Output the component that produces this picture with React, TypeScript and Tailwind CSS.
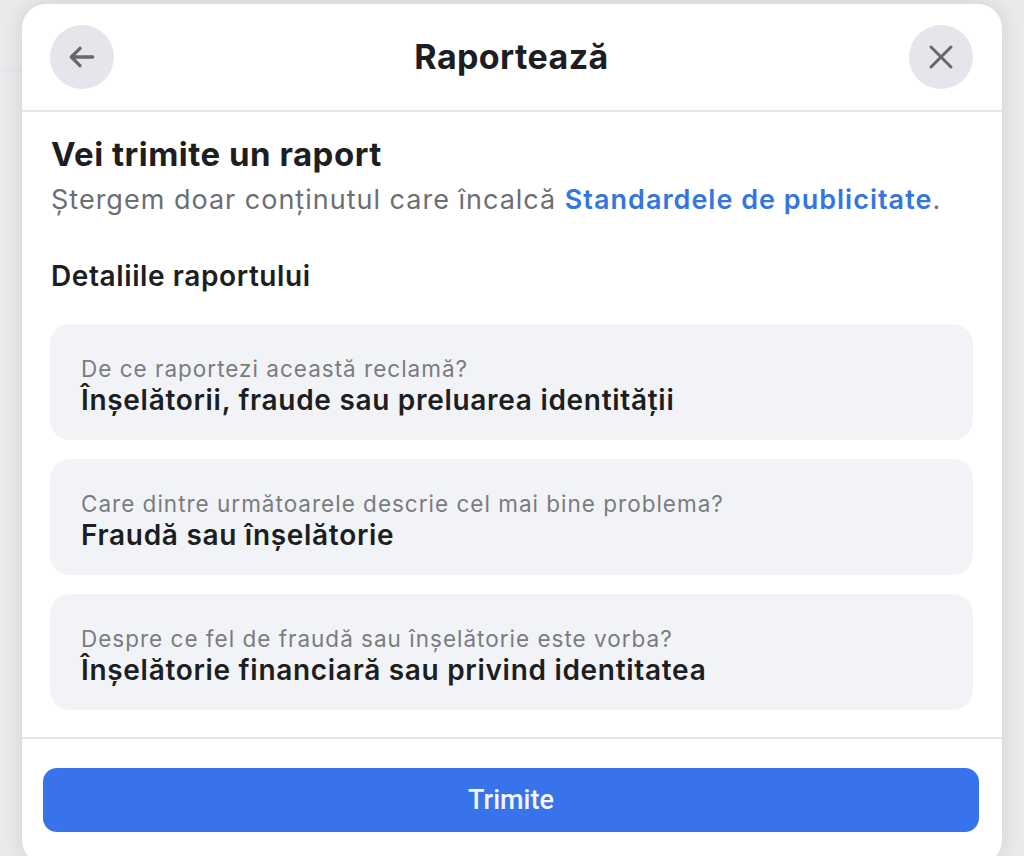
import React from "react";

const cards = [
  { label: "De ce raportezi această reclamă?", value: "Înșelătorii, fraude sau preluarea identității" },
  { label: "Care dintre următoarele descrie cel mai bine problema?", value: "Fraudă sau înșelătorie" },
  { label: "Despre ce fel de fraudă sau înșelătorie este vorba?", value: "Înșelătorie financiară sau privind identitatea" },
];

export default function App() {
  return (
    <div className="w-[1024px] h-[856px] overflow-hidden bg-[#ebebeb] font-['Inter','Noto_Sans',sans-serif] relative">
      <div className="absolute left-0 top-[68px] w-[22px] h-[4px] bg-[#e6e7f0]" />
      <div className="ml-[22px] pt-[4px] w-[980px]">
        <div className="relative h-[860px] rounded-[24px] bg-white shadow-[0_0_24px_rgba(0,0,0,0.12)] flex flex-col">
          <div className="h-[108px] flex items-center justify-between pl-[28px] pr-[29px] border-b-2 border-[#e4e6ea]">
            <button className="w-[64px] h-[64px] rounded-full bg-[#e4e6eb] flex items-center justify-center">
              <svg width="32" height="32" viewBox="0 0 24 24" fill="none" stroke="#65676b" strokeWidth="2.5" strokeLinecap="round" strokeLinejoin="round">
                <path d="M20 12H4.5" />
                <path d="M10.5 5.5 4 12l6.5 6.5" />
              </svg>
            </button>
            <div className="text-[34px] leading-[40px] font-bold text-[#1c1e21] tracking-[0.4px]">Raportează</div>
            <button className="w-[64px] h-[64px] rounded-full bg-[#e4e6eb] flex items-center justify-center">
              <svg width="30" height="30" viewBox="0 0 24 24" fill="none" stroke="#65676b" strokeWidth="2.4" strokeLinecap="round">
                <path d="M4 4l16 16M20 4 4 20" />
              </svg>
            </button>
          </div>
          <div className="pl-[29px] pr-[20px]">
            <div className="mt-[23px] text-[33px] leading-[38px] font-bold text-[#1c1e21] tracking-[0.5px]">Vei trimite un raport</div>
            <div className="mt-[10px] text-[27px] leading-[34px] text-[#6c6e73] tracking-[1px] whitespace-nowrap">
              Ștergem doar conținutul care încalcă{" "}
              <span className="text-[#3476e0] font-semibold">Standardele de publicitate</span>.
            </div>
            <div className="mt-[42px] text-[28px] leading-[34px] font-semibold text-[#1c1e21] tracking-[0.6px]">Detaliile raportului</div>
          </div>
          <div className="pl-[28px] pr-[29px] mt-[31px] flex flex-col gap-[19px]">
            {cards.map((c) => (
              <div key={c.label} className="h-[116px] rounded-[20px] bg-[#f2f3f6] pl-[31px] pt-[32px]">
                <div className="text-[22.5px] leading-[26px] text-[#7a7c80] tracking-[1px]">{c.label}</div>
                <div className="mt-[1px] text-[28px] leading-[34px] font-semibold text-[#1c1e21] tracking-[0.7px]">{c.value}</div>
              </div>
            ))}
          </div>
          <div className="mt-[27px] border-t-2 border-[#e4e6ea]" />
          <div className="pl-[21px] pr-[23px] pt-[29px]">
            <button className="w-full h-[64px] rounded-[14px] bg-[#3873eb] text-[27px] font-medium text-[#f4f6fb] font-['Roboto','Noto_Sans',sans-serif]">
              Trimite
            </button>
          </div>
        </div>
      </div>
    </div>
  );
}
